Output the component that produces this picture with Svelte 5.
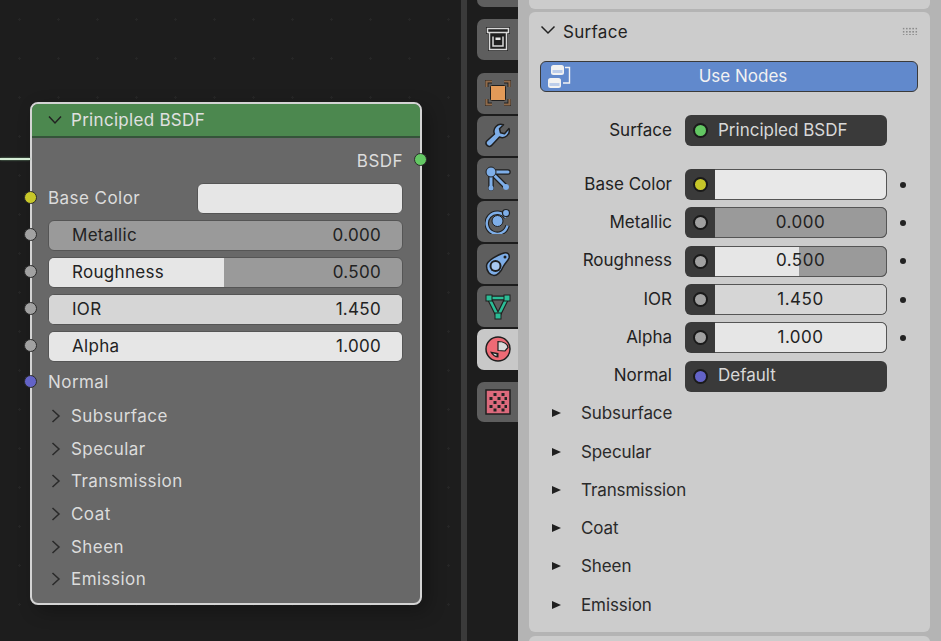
<script>
  const nodeFields = [
    { label: 'Metallic', value: '0.000', fill: 0, tone: 'track' },
    { label: 'Roughness', value: '0.500', fill: 49.5, tone: 'track' },
    { label: 'IOR', value: '1.450', fill: 100, tone: 'mid' },
    { label: 'Alpha', value: '1.000', fill: 100, tone: 'track' }
  ];
  const panels = ['Subsurface', 'Specular', 'Transmission', 'Coat', 'Sheen', 'Emission'];
  const propFields = [
    { label: 'Metallic', value: '0.000', fill: 0, tone: 'track' },
    { label: 'Roughness', value: '0.500', fill: 49, tone: 'track' },
    { label: 'IOR', value: '1.450', fill: 100, tone: 'mid' },
    { label: 'Alpha', value: '1.000', fill: 100, tone: 'track' }
  ];
</script>

<div class="screen">
  <div class="editor">
    <div class="node">
      <header class="node-head">
        <svg class="chev" viewBox="0 0 16 10" width="16" height="10"><path d="M2 1.5 8 8l6-6.500" /></svg>
        <span>Principled BSDF</span>
      </header>
      <div class="node-body">
        <div class="wire"></div>
        <div class="out-row">
          <span>BSDF</span>
          <i class="socket out green"></i>
        </div>
        <div class="in-row color-row">
          <i class="socket yellow"></i>
          <span>Base Color</span>
          <div class="swatch"></div>
        </div>
        {#each nodeFields as f}
          <div class="in-row">
            <i class="socket grey"></i>
            <div class="nfield {f.tone}">
              <div class="nfill" style="width: {f.fill}%"></div>
              <span class="nlabel">{f.label}</span>
              <span class="nvalue">{f.value}</span>
            </div>
          </div>
        {/each}
        <div class="in-row normal-row">
          <i class="socket blue"></i>
          <span>Normal</span>
        </div>
        {#each panels as p}
          <div class="node-panel">
            <svg class="chev-r" viewBox="0 0 10 16" width="10" height="16"><path d="M1.500 2 8 8l-6.500 6" /></svg>
            <span>{p}</span>
          </div>
        {/each}
      </div>
    </div>
  </div>

  <div class="divider"></div>

  <nav class="tabs">
    <div class="tab stub"></div>
    <div class="tab first">
      <svg viewBox="0 0 26 26" width="26" height="26">
        <path d="M1 1h24v7h-24zM3 8h20v17h-20z" fill="#1f1f1f"/>
        <path d="M2.500 2.500h21v4h-21zM4.500 7v16.500h17V7M8 10.500v9.500h10v-9.500" fill="none" stroke="#d8d8d8" stroke-width="1.500"/>
        <rect x="10.500" y="11.500" width="5" height="2.500" fill="#e6e6e6"/>
      </svg>
    </div>
    <div class="tab">
      <svg viewBox="0 0 26 26" width="26" height="26">
        <path d="M1.500 7V1.500H7M19 1.500h5.500V7M24.500 19v5.500H19M7 24.500H1.500V19" fill="none" stroke="#1f1f1f" stroke-width="4"/>
        <path d="M1.500 7V1.500H7M19 1.500h5.500V7M24.500 19v5.500H19M7 24.500H1.500V19" fill="none" stroke="#8f6a4a" stroke-width="2.200"/>
        <rect x="5.500" y="5.500" width="15" height="15" rx="1" fill="#e39a58" stroke="#1f1f1f" stroke-width="1"/>
      </svg>
    </div>
    <div class="tab">
      <svg viewBox="0 0 26 26" width="26" height="26">
        <path d="M24 5.500a7 7 0 0 1-9.500 8.500L7 22a3.200 3.200 0 0 1-5.200-4l7.700-7A7 7 0 0 1 18.500 1.800l-4 4 1 4 4 1z" fill="#7eaee8" stroke="#1f1f1f" stroke-width="1.500" stroke-linejoin="round"/>
      </svg>
    </div>
    <div class="tab">
      <svg viewBox="0 0 26 26" width="26" height="26">
        <path d="M6 6h17M6 6l15 15M6 6v16" fill="none" stroke="#1f1f1f" stroke-width="5.500" stroke-linecap="round"/>
        <path d="M6 6h17M6 6l15 15M6 6v16" fill="none" stroke="#7eaee8" stroke-width="3" stroke-linecap="round"/>
        <circle cx="6" cy="6" r="5" fill="#7eaee8" stroke="#1f1f1f" stroke-width="1"/>
        <circle cx="21" cy="21" r="3" fill="#7eaee8"/>
        <circle cx="6" cy="22" r="2.500" fill="#7eaee8"/>
      </svg>
    </div>
    <div class="tab">
      <svg viewBox="0 0 26 26" width="26" height="26">
        <path d="M21 9.500a10.500 10.500 0 1 0 1.500 8" fill="none" stroke="#1f1f1f" stroke-width="4.500"/>
        <path d="M21 9.500a10.500 10.500 0 1 0 1.500 8" fill="none" stroke="#7eaee8" stroke-width="2.400"/>
        <circle cx="12.500" cy="13" r="5.500" fill="#7eaee8" stroke="#1f1f1f" stroke-width="1"/>
        <circle cx="21" cy="5" r="3.500" fill="#7eaee8" stroke="#1f1f1f" stroke-width="1.200"/>
      </svg>
    </div>
    <div class="tab">
      <svg viewBox="0 0 26 26" width="26" height="26">
        <path d="M1.500 15C1.500 9 14 3.500 19 2c3.500-1 6 1.500 5 5-1 3-4 5-6 9-2 5-6 8.500-9 8.500-4 0-7.500-4-7.500-9.500z" fill="#7eaee8" stroke="#1f1f1f" stroke-width="1.500"/>
        <circle cx="10.500" cy="15" r="6" fill="#1f1f1f"/>
        <circle cx="10.500" cy="15" r="4" fill="#a8c8f0"/>
        <circle cx="20" cy="6" r="1.500" fill="#1f1f1f"/>
      </svg>
    </div>
    <div class="tab">
      <svg viewBox="0 0 26 26" width="26" height="26">
        <path d="M4 4h18L13 22z" fill="none" stroke="#1f1f1f" stroke-width="5" stroke-linejoin="round"/>
        <path d="M4 4h18L13 22z" fill="none" stroke="#2bbd96" stroke-width="2.600"/>
        <rect x="1" y="1" width="6" height="6" fill="#2bbd96" stroke="#1f1f1f" stroke-width="1"/>
        <rect x="19" y="1" width="6" height="6" fill="#2bbd96" stroke="#1f1f1f" stroke-width="1"/>
        <rect x="10" y="19" width="6" height="6" fill="#2bbd96" stroke="#1f1f1f" stroke-width="1"/>
      </svg>
    </div>
    <div class="tab active">
      <svg viewBox="0 0 26 26" width="26" height="26">
        <circle cx="13" cy="13" r="12" fill="#ee6a75" stroke="#1f1f1f" stroke-width="1.500"/>
        <path d="M13 5.500Q22 5.500 23 11.500L20 15 13 14.500z" fill="#d9d9d9" stroke="#1f1f1f" stroke-width="1.200"/>
        <path d="M5 15.500 13.500 17V21.500Q8 21.500 5 15.500z" fill="#1f1f1f"/>
        <path d="M8 17.500l3.500.8V20Q9.500 19.500 8 17.500z" fill="#dcdcdc"/>
      </svg>
    </div>
    <div class="tab second">
      <svg viewBox="0 0 26 26" width="26" height="26" class="checker">
        <rect x="1" y="1" width="24" height="24" fill="#dc6a7c" stroke="#1f1f1f" stroke-width="1.500"/>
        <path d="M8.500 4h3v3h-3zM16.500 4h3v3h-3zM4.500 8h3v3h-3zM12.500 8h3v3h-3zM19.500 8h2.500v3h-2.500zM8.500 12h3v3h-3zM16.500 12h3v3h-3zM4.500 16h3v3h-3zM12.500 16h3v3h-3zM19.500 16h2.500v3h-2.500zM8.500 19.500h3v3h-3zM16.500 19.500h3v3h-3z" fill="#222"/>
      </svg>
    </div>
  </nav>

  <main class="props">
    <div class="panel-stub"></div>
    <section class="panel">
      <div class="panel-head">
        <svg viewBox="0 0 16 10" width="16" height="10"><path d="M1.500 1.500 8 8l6.500-6.500" /></svg>
        <h2>Surface</h2>
        <div class="grip"></div>
      </div>

      <button class="use-nodes">
        <svg viewBox="0 0 24 26" width="24" height="26">
          <rect x="4" y="0" width="13" height="10" rx="2.500" fill="#f2f2f2"/>
          <rect x="1" y="13" width="13" height="10" rx="2.500" fill="#f2f2f2"/>
          <rect x="5.500" y="5" width="10" height="3" fill="#bccdea"/>
          <rect x="2.500" y="18" width="10" height="3" fill="#bccdea"/>
          <path d="M18 2.500h4.500v15.500H16" fill="none" stroke="#f2f2f2" stroke-width="1.400"/>
        </svg>
        <span>Use Nodes</span>
      </button>

      <div class="prop surface-row">
        <span class="plabel">Surface</span>
        <div class="dark-btn"><i class="dot green"></i><span>Principled BSDF</span></div>
      </div>

      <div class="prop">
        <span class="plabel">Base Color</span>
        <div class="sock-field">
          <div class="sock-cell"><i class="dot yellow"></i></div>
          <div class="pfield swatch-field"></div>
        </div>
        <i class="decorator"></i>
      </div>
      {#each propFields as f}
        <div class="prop">
          <span class="plabel">{f.label}</span>
          <div class="sock-field">
            <div class="sock-cell"><i class="dot grey"></i></div>
            <div class="pfield {f.tone}">
              <div class="pfill" style="width: {f.fill}%"></div>
              <span>{f.value}</span>
            </div>
          </div>
          <i class="decorator"></i>
        </div>
      {/each}
      <div class="prop">
        <span class="plabel">Normal</span>
        <div class="dark-btn"><i class="dot blue"></i><span>Default</span></div>
      </div>

      <div class="sub-list">
        {#each panels as p}
          <div class="sub-row">
            <i class="tri"></i>
            <span>{p}</span>
          </div>
        {/each}
      </div>
    </section>
    <div class="panel-next"></div>
  </main>
</div>

<style>
  :global(body) {
    margin: 0;
    background: #1d1d1d;
  }

  .screen {
    display: flex;
    width: 941px;
    height: 641px;
    overflow: hidden;
    font-family: Inter, "Liberation Sans", sans-serif;
    font-size: 17px;
    background: #1d1d1d;
  }

  .editor {
    position: relative;
    width: 461px;
    flex: none;
    background-color: #1d1d1d;
    background-image: radial-gradient(circle, #262626 1px, transparent 1.2px);
    background-size: 39px 39px;
  }

  .node {
    position: absolute;
    left: 30px;
    top: 102px;
    width: 392px;
    height: 503px;
    box-sizing: border-box;
    border: 2px solid #d4d4d4;
    border-radius: 8px;
    background: #686868;
    box-shadow: 6px 6px 18px rgba(0, 0, 0, 0.28);
  }

  .node-head {
    display: flex;
    align-items: center;
    gap: 8px;
    height: 34px;
    padding-left: 15px;
    box-sizing: border-box;
    background: #4c884f;
    border-bottom: 2px solid #35543a;
    border-radius: 6px 6px 0 0;
    color: #e0e0e0;
    letter-spacing: 0.3px;
  }

  .chev,
  .chev-r,
  .panel-head svg {
    flex: none;
    fill: none;
    stroke: #222;
    stroke-width: 1.500;
  }

  .node-body {
    position: relative;
    color: #dcdcdc;
    letter-spacing: 0.45px;
  }

  .wire {
    position: absolute;
    left: -32px;
    top: 20px;
    width: 30px;
    height: 2px;
    background: #d6eed7;
    box-shadow: 0 0 2px #7fae84;
  }

  .out-row {
    position: relative;
    display: flex;
    justify-content: flex-end;
    align-items: center;
    height: 18px;
    padding: 14px 17px 9.500px 0;
  }

  .in-row {
    position: relative;
    display: flex;
    align-items: center;
    height: 37px;
    padding: 0 17px 0 16px;
    box-sizing: border-box;
  }

  .color-row {
    justify-content: space-between;
  }

  .normal-row {
    height: 35px;
  }

  .socket {
    position: absolute;
    left: -8px;
    top: 50%;
    width: 11px;
    height: 11px;
    margin-top: -7px;
    border: 1.500px solid #2b2b2b;
    border-radius: 50%;
  }

  .socket.out {
    left: auto;
    right: -7px;
    margin-top: -6px;
  }

  .green {
    background: #63c763;
  }

  .yellow {
    background: #c7c729;
  }

  .grey {
    background: #a1a1a1;
  }

  .blue {
    background: #6363c7;
  }

  .swatch {
    width: 206px;
    height: 31px;
    box-sizing: border-box;
    border: 1px solid #555;
    border-radius: 6px;
    background: #e6e6e6;
  }

  .nfield {
    position: relative;
    display: flex;
    justify-content: space-between;
    align-items: center;
    width: 100%;
    height: 31px;
    padding: 0 21px 0 23px;
    box-sizing: border-box;
    overflow: hidden;
    border: 1px solid #555;
    border-radius: 6px;
    background: #9a9a9a;
    color: #222;
    letter-spacing: 0.3px;
  }

  .nfield.mid {
    background: #d6d6d6;
  }

  .nfield.mid .nfill {
    background: #d6d6d6;
  }

  .nfill {
    position: absolute;
    left: 0;
    top: 0;
    bottom: 0;
    background: #e6e6e6;
  }

  .nlabel,
  .nvalue {
    position: relative;
  }

  .node-panel {
    display: flex;
    align-items: center;
    gap: 10px;
    height: 32.700px;
    padding-left: 19px;
  }

  .chev-r {
    stroke: #2a2a2a;
  }

  .divider {
    width: 6px;
    flex: none;
    background: #3a3a3a;
  }

  .tabs {
    display: flex;
    flex-direction: column;
    width: 51px;
    flex: none;
    padding-left: 10px;
    box-sizing: border-box;
    background: #1d1d1d;
  }

  .tab {
    display: flex;
    align-items: center;
    justify-content: center;
    flex: none;
    height: 40.700px;
    margin-bottom: 2px;
    border-radius: 7px 0 0 7px;
    background: #5e5e5e;
  }

  .tab.stub {
    height: 7px;
    margin-bottom: 12px;
    border-radius: 0 0 0 7px;
  }

  .tab.first {
    margin-bottom: 13.300px;
  }

  .tab.active {
    background: #c8c8c8;
    margin-bottom: 12px;
  }

  .props {
    flex: 1;
    padding: 0 11px;
    background: #b4b4b4;
  }

  .panel-stub {
    height: 9px;
    margin-bottom: 3px;
    background: #cccccc;
    border-radius: 0 0 6px 6px;
  }

  .panel {
    height: 620px;
    box-sizing: border-box;
    padding: 0 12px 0 11px;
    border-radius: 6px;
    background: #cccccc;
    color: #222;
  }

  .panel-next {
    height: 10px;
    margin-top: 4px;
    background: #cccccc;
    border-radius: 6px 6px 0 0;
  }

  .panel-head {
    display: flex;
    align-items: center;
    height: 38px;
    gap: 7px;
  }

  .panel-head svg {
    margin-bottom: 3px;
  }

  .panel-head h2 {
    flex: 1;
    margin: 2px 0 0;
    font-size: 17px;
    font-weight: 400;
    letter-spacing: 0.3px;
  }

  .grip {
    width: 16px;
    height: 8px;
    background-image: radial-gradient(circle, #8c8c8c 0.8px, transparent 1px);
    background-size: 3.200px 3.200px;
  }

  .use-nodes {
    position: relative;
    display: flex;
    align-items: center;
    justify-content: center;
    width: 100%;
    height: 31px;
    margin: 11px 0 0;
    padding: 0 0 2px 28px;
    box-sizing: border-box;
    border: 1px solid #3a3a3a;
    border-radius: 6px;
    background: #6189cc;
    color: #f2f2f2;
    font: inherit;
  }

  .use-nodes svg {
    position: absolute;
    left: 6px;
    top: 2.500px;
  }

  .prop {
    display: flex;
    align-items: center;
    height: 31px;
    margin-bottom: 7.350px;
  }

  .surface-row {
    margin-top: 23px;
    margin-bottom: 23px;
  }

  .plabel {
    width: 132px;
    margin-right: 13px;
    padding-bottom: 2px;
    text-align: right;
    flex: none;
  }

  .sock-field,
  .dark-btn {
    display: flex;
    align-items: center;
    width: 202px;
    height: 31px;
    box-sizing: border-box;
    border-radius: 6px;
    flex: none;
  }

  .dark-btn {
    gap: 10px;
    padding-left: 8px;
    background: #3a3a3a;
    color: #d8d8d8;
  }

  .dark-btn span {
    padding-bottom: 2px;
  }

  .sock-field {
    overflow: hidden;
    background: #3a3a3a;
  }

  .sock-cell {
    display: flex;
    align-items: center;
    width: 30px;
    height: 100%;
    padding-left: 8px;
    box-sizing: border-box;
    flex: none;
  }

  .dot {
    display: block;
    width: 11px;
    height: 11px;
    border: 2px solid #1a1a1a;
    border-radius: 50%;
    flex: none;
  }

  .pfield {
    position: relative;
    display: flex;
    align-items: center;
    justify-content: center;
    flex: 1;
    height: 100%;
    box-sizing: border-box;
    overflow: hidden;
    border: 1px solid #555;
    border-left: none;
    border-radius: 0 6px 6px 0;
    background: #9a9a9a;
    letter-spacing: 0.5px;
  }

  .pfield.mid {
    background: #d6d6d6;
  }

  .pfield.mid .pfill {
    background: #d6d6d6;
  }

  .swatch-field {
    background: #e8e8e8;
  }

  .pfill {
    position: absolute;
    left: 0;
    top: 0;
    bottom: 0;
    background: #e6e6e6;
  }

  .pfield span {
    position: relative;
    padding-bottom: 2px;
  }

  .decorator {
    width: 6px;
    height: 6px;
    margin-left: 13px;
    border-radius: 50%;
    background: #222;
    flex: none;
  }

  .sub-list {
    margin-top: -4px;
  }

  .sub-row {
    display: flex;
    align-items: center;
    height: 38.300px;
    padding-left: 12px;
    letter-spacing: -0.1px;
    color: #2a2a2a;
  }

  .sub-row span {
    padding-bottom: 2px;
  }

  .tri {
    width: 0;
    height: 0;
    margin-right: 20px;
    margin-bottom: 2px;
    border-left: 9px solid #1f1f1f;
    border-top: 4px solid transparent;
    border-bottom: 4px solid transparent;
    flex: none;
  }
</style>
